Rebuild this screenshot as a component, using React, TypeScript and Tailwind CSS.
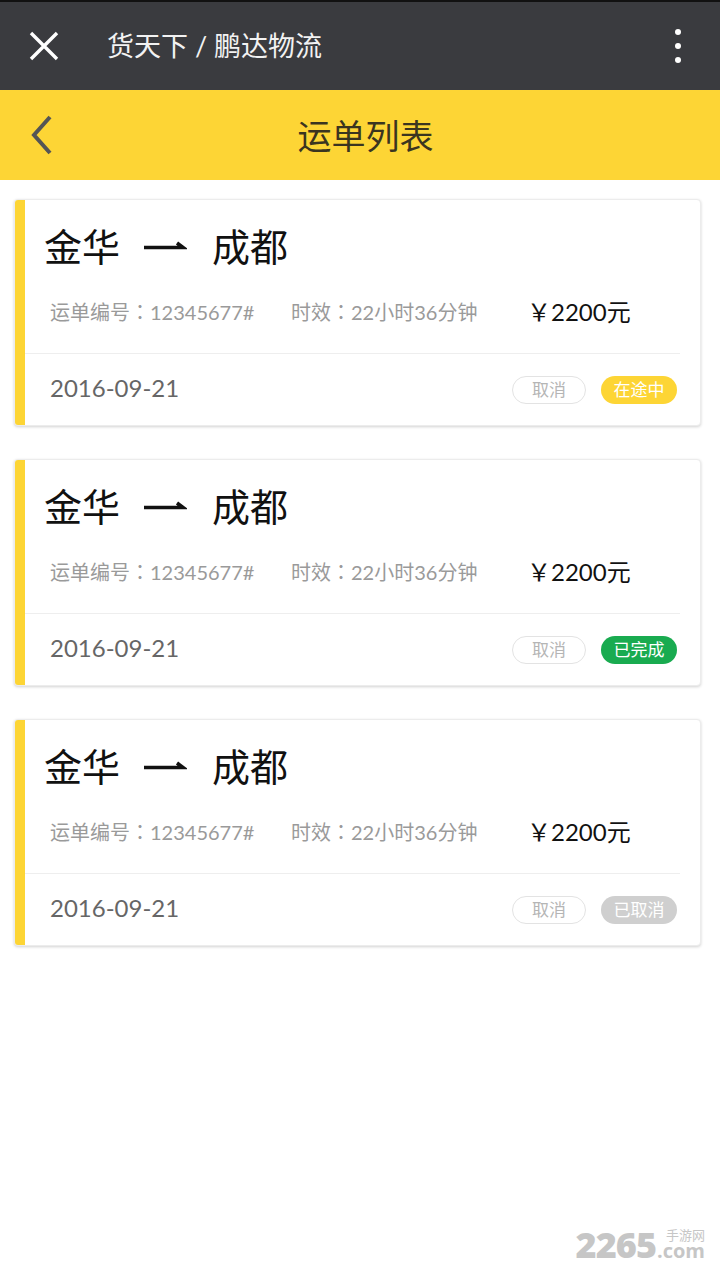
import React from "react";

const font = { fontFamily: '"Lato", "Noto Sans CJK SC", sans-serif' } as React.CSSProperties;
const tc = { fontFamily: '"Noto Sans CJK TC", sans-serif' } as React.CSSProperties;

type Status = { label: string; cls: string };

function Arrow() {
  return (
    <svg width="44" height="14" viewBox="0 0 44 14" className="ml-[23px] mr-[25px]">
      <path d="M1 8.5 L40 8.5 L34 4" stroke="#111" strokeWidth="3.6" fill="none" strokeLinecap="butt" strokeLinejoin="miter" />
    </svg>
  );
}

function Card({ status }: { status: Status }) {
  return (
    <div className="ml-[14px] mr-[19px] flex rounded-[4px] bg-white shadow-[0_1px_3px_rgba(0,0,0,0.18)] overflow-hidden border border-[#ececec]">
      <div className="w-[10px] bg-[#fdd535] shrink-0" />
      <div className="flex-1 flex flex-col">
        <div className="pt-[22px] pb-[26px]">
          <div className="flex items-center h-[48px] pl-[19px] text-[38px] text-[#111] leading-[48px]">
            <span>金华</span>
            <Arrow />
            <span>成都</span>
          </div>
          <div className="flex items-center h-[30px] mt-[27px] pl-[25px] text-[20px] text-[#9a9a9a] leading-[30px]">
            <span className="w-[241px]">
              运单编号<span style={tc}>：</span>12345677#
            </span>
            <span className="w-[236px]">
              时效<span style={tc}>：</span>22小时36分钟
            </span>
            <span className="text-[24px] text-[#111]">￥2200元</span>
          </div>
        </div>
        <div className="h-px bg-[#eeeeee] mr-[20px]" />
        <div className="h-[71px] flex items-center pl-[25px] pr-[23px] pb-[3px]">
          <span className="text-[24px] text-[#666]">2016-09-21</span>
          <div className="ml-auto flex items-center gap-[15px] mt-[3px]">
            <span className="w-[74px] h-[28px] rounded-full border border-[#e3e3e3] text-[#b5b5b5] text-[17px] flex items-center justify-center">取消</span>
            <span className={`w-[76px] h-[28px] rounded-full text-white text-[17px] flex items-center justify-center ${status.cls}`}>{status.label}</span>
          </div>
        </div>
      </div>
    </div>
  );
}

export default function App() {
  const statuses: Status[] = [
    { label: "在途中", cls: "bg-[#fdd535]" },
    { label: "已完成", cls: "bg-[#19ab50]" },
    { label: "已取消", cls: "bg-[#cfcfcf]" },
  ];
  return (
    <div style={font} className="relative w-[720px] h-[1280px] bg-white overflow-hidden">
      <div className="h-[2px] bg-[#111]" />
      <div className="h-[88px] bg-[#3a3b3f] flex items-center">
        <svg width="30" height="30" viewBox="0 0 30 30" className="ml-[29px]">
          <path d="M2 2 L28 28 M28 2 L2 28" stroke="#fff" strokeWidth="3.4" />
        </svg>
        <span className="ml-[48px] text-[27px] text-[#f2f2f2]">货天下 / 鹏达物流</span>
        <div className="ml-auto mr-[39px] flex flex-col gap-[8px]">
          <span className="w-[6px] h-[6px] rounded-full bg-white" />
          <span className="w-[6px] h-[6px] rounded-full bg-white" />
          <span className="w-[6px] h-[6px] rounded-full bg-white" />
        </div>
      </div>
      <div className="h-[90px] bg-[#fdd535] flex items-center relative">
        <svg width="24" height="40" viewBox="0 0 24 40" className="ml-[30px]">
          <path d="M20 2 L4 20 L20 38" stroke="#555" strokeWidth="4" fill="none" />
        </svg>
        <div className="absolute inset-0 flex items-center justify-center pl-[11px] text-[34px] text-[#3b3520] pointer-events-none">运单列表</div>
      </div>
      <div className="pt-[19px] flex flex-col gap-[33px]">
        {statuses.map((s, i) => (
          <Card key={i} status={s} />
        ))}
      </div>
      <div className="absolute right-[15px] bottom-[19px] flex items-end text-[#c6c6c6] select-none">
        <span className="text-[36px] font-black leading-[32px] tracking-[-1px]" style={{ fontFamily: '"Open Sans", sans-serif' }}>2265</span>
        <div className="flex flex-col items-end ml-[1px]">
          <span className="text-[13px] leading-[13px]" style={{ fontFamily: '"Noto Sans CJK SC", sans-serif' }}>手游网</span>
          <span className="text-[20px] leading-[20px] font-bold" style={{ fontFamily: '"Open Sans", sans-serif' }}>.com</span>
        </div>
      </div>
    </div>
  );
}
